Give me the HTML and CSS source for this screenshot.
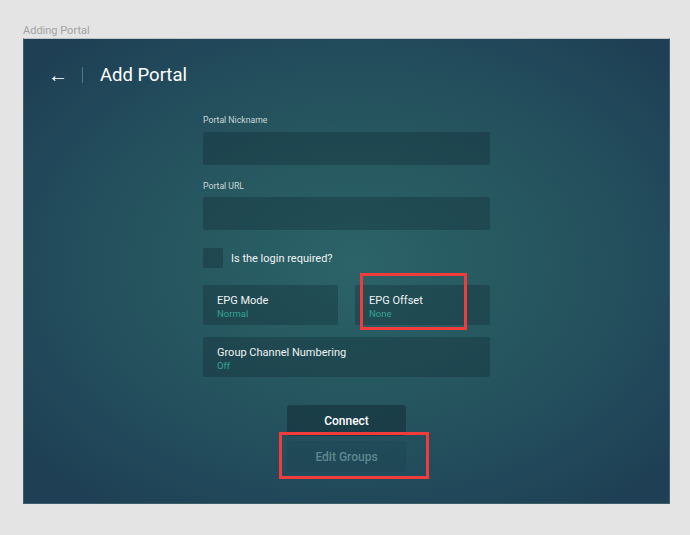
FILE: index.html
```html
<!DOCTYPE html>
<html>
<head>
<meta charset="utf-8">
<link rel="stylesheet" href="styles.css">
</head>
<body>
<div class="caption">Adding Portal</div>
<div class="frame">
  <div class="header">
    <span class="back">&#8592;</span>
    <span class="sep"></span>
    <span class="title">Add Portal</span>
  </div>
  <div class="form">
    <div class="label first">Portal Nickname</div>
    <div class="input"></div>
    <div class="label second">Portal URL</div>
    <div class="input"></div>
    <div class="check-row">
      <span class="checkbox"></span>
      <span class="check-text">Is the login required?</span>
    </div>
    <div class="cards">
      <div class="card">
        <div class="card-title">EPG Mode</div>
        <div class="card-sub">Normal</div>
      </div>
      <div class="card">
        <div class="card-title">EPG Offset</div>
        <div class="card-sub">None</div>
      </div>
    </div>
    <div class="card wide">
      <div class="card-title">Group Channel Numbering</div>
      <div class="card-sub">Off</div>
    </div>
    <div class="buttons">
      <div class="btn connect">Connect</div>
      <div class="btn edit">Edit Groups</div>
    </div>
  </div>
  <div class="mark mark-offset"></div>
  <div class="mark mark-edit"></div>
</div>
</body>
</html>
```
FILE: styles.css
```css
html, body {
  margin: 0;
  padding: 0;
  background: #e4e4e4;
  font-family: Roboto, "Noto Sans", sans-serif;
}
.caption {
  padding-left: 23px;
  padding-top: 24px;
  height: 14px;
  font-size: 11px;
  line-height: 14px;
  color: #a2a2a2;
}
.frame {
  position: relative;
  margin-left: 23px;
  width: 645px;
  height: 464px;
  border: 1px solid #3d5d6b;
  border-top-color: #bcc3c8;
  background:
    radial-gradient(ellipse 420px 300px at 330px 225px, #2b6368 0%, #26565f 45%, #21485a 80%, #1f4054 100%);
  background-color: #1f4054;
}
.header {
  height: 72px;
  display: flex;
  align-items: center;
  padding-left: 24px;
  color: #fff;
}
.back {
  font-size: 20px;
  line-height: 20px;
  width: 18px;
  margin-top: -1px;
}
.sep {
  width: 1px;
  height: 16px;
  background: rgba(255, 255, 255, 0.25);
  margin-left: 16px;
  margin-right: 17px;
}
.title {
  font-size: 18.5px;
  line-height: 22px;
}
.form {
  margin-left: 179px;
  width: 287px;
  display: flex;
  flex-direction: column;
}
.label {
  font-size: 8.7px;
  line-height: 12px;
  color: #c9d6d8;
  height: 12px;
}
.label.first { margin-top: 3px; margin-bottom: 6px; }
.label.second { margin-top: 15px; margin-bottom: 5px; }
.input {
  height: 33px;
  border-radius: 2px;
  background: rgba(14, 34, 44, 0.3);
}
.check-row {
  margin-top: 18px;
  height: 20px;
  display: flex;
  align-items: center;
}
.checkbox {
  width: 20px;
  height: 20px;
  border-radius: 2px;
  background: rgba(14, 34, 44, 0.32);
}
.check-text {
  margin-left: 8px;
  font-size: 11px;
  color: #eef3f3;
}
.cards {
  margin-top: 17px;
  display: flex;
  gap: 17px;
}
.card {
  flex: 1;
  height: 40px;
  box-sizing: border-box;
  padding: 8px 14px 0;
  border-radius: 2px;
  background: rgba(14, 34, 44, 0.3);
}
.card.wide {
  flex: none;
  margin-top: 12px;
}
.card-title {
  font-size: 11px;
  line-height: 15px;
  color: #eef3f3;
}
.card-sub {
  font-size: 9.5px;
  line-height: 11px;
  color: #35a396;
}
.buttons {
  margin-top: 28px;
  display: flex;
  flex-direction: column;
  align-items: center;
  gap: 5px;
}
.btn {
  width: 119px;
  height: 31px;
  border-radius: 3px;
  display: flex;
  align-items: center;
  justify-content: center;
  font-size: 12px;
  font-weight: 500;
}
.btn.connect {
  background: rgba(18, 44, 54, 0.55);
  color: #ffffff;
}
.btn.edit {
  background: rgba(18, 44, 54, 0.12);
  color: #5f8890;
}
.mark {
  position: absolute;
  border: 3px solid #f23b3b;
  box-sizing: border-box;
}
.mark-offset {
  left: 336px;
  top: 234px;
  width: 107px;
  height: 57px;
}
.mark-edit {
  left: 255px;
  top: 393px;
  width: 150px;
  height: 47px;
}
```
